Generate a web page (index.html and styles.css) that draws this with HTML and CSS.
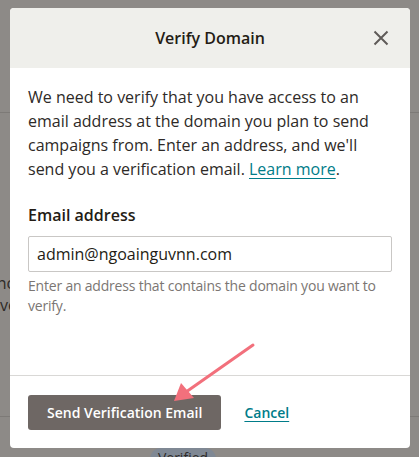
FILE: index.html
```html
<!DOCTYPE html>
<html>
<head>
<meta charset="utf-8">
<link rel="stylesheet" href="styles.css">
</head>
<body>
<div class="page">
  <div class="bg-line bg-line-top"></div>
  <div class="bg-text">
    <p class="bg-l1">once</p>
    <p class="bg-l2">verified</p>
  </div>
  <div class="bg-line bg-line-bottom"></div>
  <div class="bg-badge">Verified</div>
</div>
<div class="modal">
  <div class="modal-header">
    <h1>Verify Domain</h1>
    <button class="close" aria-label="Close">
      <svg width="16" height="16" viewBox="0 0 16 16"><path d="M1.5 1.5 L14.5 14.5 M14.5 1.5 L1.5 14.5" stroke="#5f5b58" stroke-width="2" fill="none"/></svg>
    </button>
  </div>
  <div class="modal-body">
    <p class="intro">We need to verify that you have access to an email address at the domain you plan to send campaigns from. Enter an address, and we'll send you a verification email. <a href="#">Learn more</a>.</p>
    <label class="field-label">Email address</label>
    <div class="input">admin@ngoainguvnn.com</div>
    <p class="help">Enter an address that contains the domain you want to verify.</p>
  </div>
  <div class="modal-footer">
    <button class="primary">Send Verification Email</button>
    <a href="#" class="cancel">Cancel</a>
  </div>
</div>
<svg class="arrow" width="419" height="457" viewBox="0 0 419 457">
  <line x1="253" y1="345" x2="186" y2="392" stroke="#f2707c" stroke-width="3" stroke-linecap="round"/>
  <polygon points="174,401 181,383 194,398" fill="#f2707c"/>
</svg>
</body>
</html>
```
FILE: styles.css
```css
* { box-sizing: border-box; }
html, body { margin: 0; padding: 0; }
body {
  width: 419px;
  height: 457px;
  overflow: hidden;
  background: #8d8a87;
  font-family: "Open Sans", "Liberation Sans", sans-serif;
  color: #241c15;
  position: relative;
}
.page { position: relative; width: 419px; height: 457px; }
.bg-line { position: absolute; left: 0; right: 0; height: 1px; background: #7d7a77; }
.bg-line-top { top: 112px; }
.bg-line-bottom { top: 416px; }
.bg-text { position: absolute; left: 0; top: 272px; font-size: 16px; color: #2e2a27; line-height: 22px; }
.bg-text p { margin: 0; }
.bg-l1 { margin-left: -13px !important; }
.bg-badge {
  position: absolute; left: 150px; top: 448px; width: 66px; height: 22px;
  border-radius: 11px; background: #7f8894; color: #2e2a27; font-size: 14px;
  text-align: center; line-height: 20px;
}
.modal {
  position: absolute;
  left: 10px; top: 8px; width: 400px; height: 440px;
  background: #fff;
  border-radius: 4px;
  overflow: hidden;
  display: flex;
  flex-direction: column;
}
.modal-header {
  height: 60px;
  background: #efefeb;
  display: flex; align-items: center; justify-content: center;
  position: relative;
}
.modal-header h1 { margin: 0; font-size: 16px; font-weight: 600; color: #241c15; }
.close {
  position: absolute; right: 21px; top: 22px;
  border: 0; background: none; padding: 0; width: 16px; height: 16px;
}
.close svg { display: block; }
.modal-body { padding: 17px 18px 0 18px; flex: 1; }
.intro { margin: 0; font-size: 16px; line-height: 24px; color: #2e2a27; }
.intro a { color: #007c89; text-decoration: underline; text-underline-offset: 3px; text-decoration-thickness: 1px; }
.field-label { display: block; margin-top: 23px; font-size: 16px; font-weight: 600; color: #241c15; line-height: 22px; }
.input {
  margin-top: 10px; height: 36px; border: 1px solid #c9c7c5; border-radius: 2px;
  padding: 0 8px; font-size: 16px; line-height: 34px; color: #241c15;
}
.help { margin: 4px 0 0; font-size: 14px; line-height: 20px; color: #7b7673; font-weight: 500; letter-spacing: -0.2px; }
.modal-footer {
  border-top: 1px solid #d9d8d6;
  height: 73px;
  display: flex; align-items: center; gap: 23px;
  padding: 0 18px;
}
.primary {
  height: 35px; padding: 0 19px; border: 0; border-radius: 3px;
  background: #6e6764; color: #fff; font-family: inherit; font-size: 14px; font-weight: 600;
}
.cancel { color: #007c89; font-size: 14px; font-weight: 600; text-decoration: underline; text-underline-offset: 3px; }
.arrow { position: absolute; left: 0; top: 0; pointer-events: none; }
```
